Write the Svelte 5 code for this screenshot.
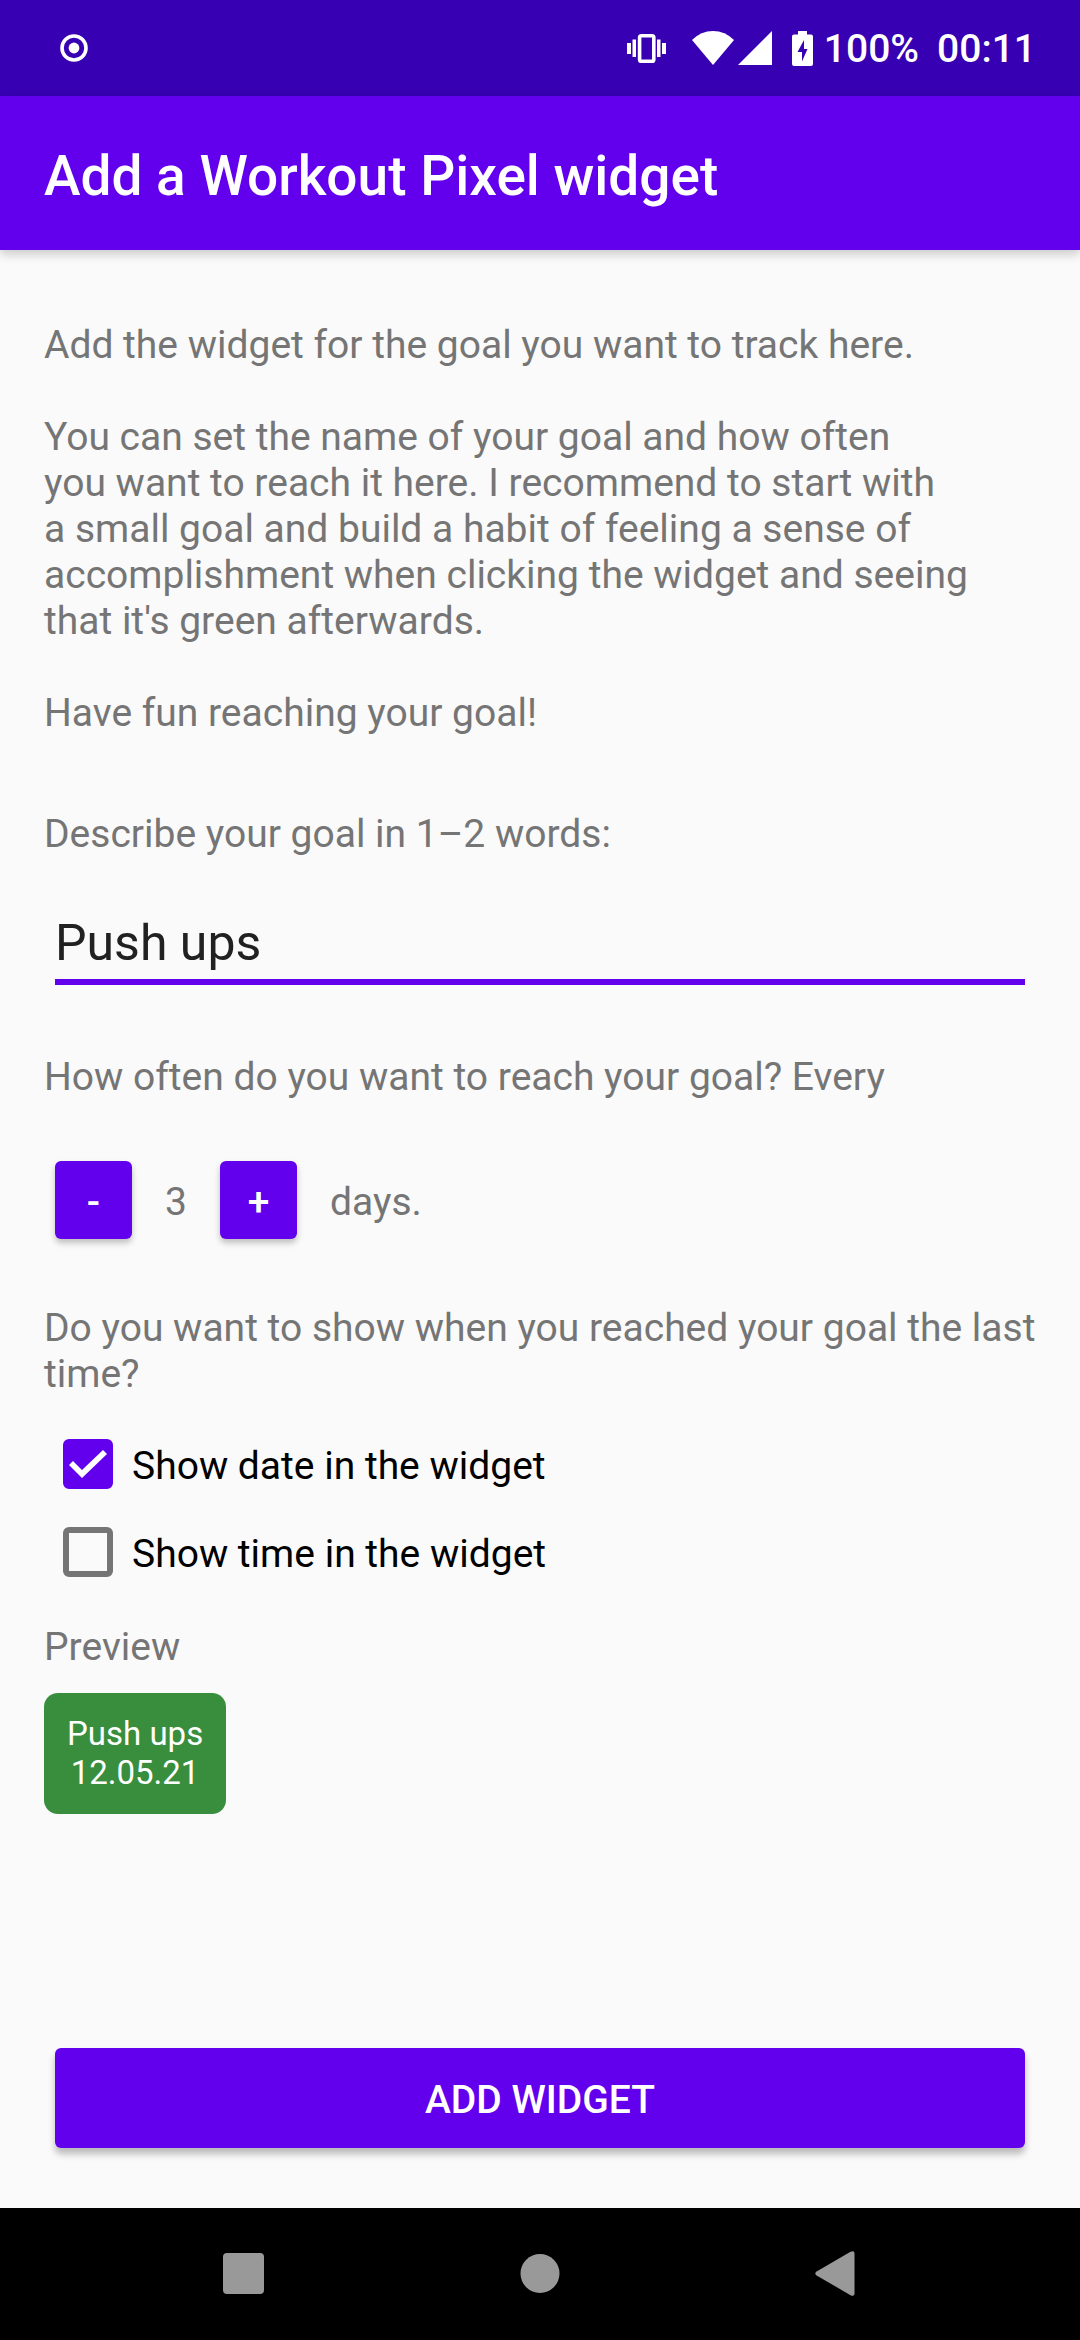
<script>
  let goal = $state('Push ups');
  let days = $state(3);
  let showDate = $state(true);
  let showTime = $state(false);
</script>

<div class="screen">
  <div class="status">
    <svg class="record" viewBox="0 0 28 28" width="28" height="28" aria-hidden="true">
      <circle cx="14" cy="14" r="12" fill="none" stroke="#fff" stroke-width="3.6" />
      <circle cx="14" cy="14" r="5.4" fill="#fff" />
    </svg>
    <div class="indicators">
      <svg class="vibrate" viewBox="0 0 39 29" width="39" height="29" aria-hidden="true">
        <rect x="12.6" y="1.8" width="14.2" height="25.4" rx="1.8" fill="none" stroke="#fff" stroke-width="3.6" />
        <path d="M0 9h4v11H0zM5.5 5.500h3.500v17.500H5.500zM30 5.500h3.500v17.500H30zM35 9h4v11h-4z" fill="#fff" />
      </svg>
      <svg class="wifi" viewBox="0 0 42 34" width="42" height="34" aria-hidden="true">
        <path d="M21 34 0 9Q9 0 21 0T42 9Z" fill="#fff" />
      </svg>
      <svg class="signal" viewBox="0 0 34 34" width="34" height="34" aria-hidden="true">
        <path d="M34 0V34H0Z" fill="#fff" />
      </svg>
      <svg class="battery" viewBox="0 0 21 35" width="21" height="35" aria-hidden="true">
        <path fill-rule="evenodd" fill="#fff" d="M6 0h9v3.500h4a2 2 0 0 1 2 2V33a2 2 0 0 1-2 2H2a2 2 0 0 1-2-2V5.500a2 2 0 0 1 2-2h4ZM12 9 5.500 21H10v9.500L15.500 18H12Z" />
      </svg>
      <span class="percent">100%</span>
      <span class="clock">00:11</span>
    </div>
  </div>

  <header class="appbar"><h1>Add a Workout Pixel widget</h1></header>

  <main>
    <div class="intro">
      <p>Add the widget for the goal you want to track here.</p>
      <p>
        You can set the name of your goal and how often<br />
        you want to reach it here. I recommend to start with<br />
        a small goal and build a habit of feeling a sense of<br />
        accomplishment when clicking the widget and seeing<br />
        that it's green afterwards.
      </p>
      <p>Have fun reaching your goal!</p>
    </div>

    <label class="goal-label" for="goal">Describe your goal in 1–2 words:</label>
    <input id="goal" class="goal" type="text" bind:value={goal} />

    <p class="often">How often do you want to reach your goal? Every</p>
    <div class="stepper">
      <button type="button" aria-label="Fewer days" onclick={() => (days = Math.max(1, days - 1))}>-</button>
      <output>{days}</output>
      <button type="button" aria-label="More days" onclick={() => (days += 1)}>+</button>
      <span class="unit">days.</span>
    </div>

    <p class="question">Do you want to show when you reached your goal the last time?</p>
    <label class="check"><input type="checkbox" bind:checked={showDate} /><span>Show date in the widget</span></label>
    <label class="check"><input type="checkbox" bind:checked={showTime} /><span>Show time in the widget</span></label>

    <p class="preview-title">Preview</p>
    <div class="preview">
      <span>{goal}</span>
      {#if showDate}<span>12.05.21</span>{/if}
      {#if showTime}<span>00:11</span>{/if}
    </div>

    <button type="button" class="add">ADD WIDGET</button>
  </main>

  <nav aria-label="System navigation">
    <button type="button" aria-label="Recent apps">
      <svg viewBox="0 0 46 46" width="46" height="46"><rect x="2" y="2" width="41" height="41" rx="4" fill="#999" /></svg>
    </button>
    <button type="button" aria-label="Home">
      <svg viewBox="0 0 46 46" width="46" height="46"><circle cx="23" cy="22.500" r="19.500" fill="#999" /></svg>
    </button>
    <button type="button" aria-label="Back">
      <svg viewBox="0 0 46 46" width="46" height="46"><path d="M3.600 20.600 37.500.8Q41.500-1 41.500 2.500V42.500Q41.500 46 37.500 44.200L3.600 24.400Q1 22.500 3.600 20.600Z" fill="#999" /></svg>
    </button>
  </nav>
</div>

<style>
  :global(body) {
    margin: 0;
    background: #fafafa;
  }
  .screen {
    display: flex;
    flex-direction: column;
    min-height: 100vh;
    background: #fafafa;
    color: #757575;
    font-family: Roboto, sans-serif;
    font-size: 39px;
    line-height: 46px;
  }
  .screen * {
    box-sizing: border-box;
  }
  h1,
  p {
    margin: 0;
  }
  button {
    border: 0;
    padding: 0;
    font: inherit;
    font-weight: 500;
    color: #fff;
    cursor: pointer;
  }
  svg {
    display: block;
    flex: none;
  }
  .status {
    display: flex;
    align-items: center;
    justify-content: space-between;
    height: 96px;
    padding: 0 44px 0 60px;
    background: #3700b3;
    color: #fff;
    font-weight: 500;
  }
  .indicators {
    display: flex;
    align-items: center;
  }
  .wifi {
    margin-left: 26px;
  }
  .signal {
    margin-left: 4px;
  }
  .battery {
    margin-left: 20px;
  }
  .percent {
    margin: 0 18px 0 11px;
  }
  .percent,
  .clock {
    padding-top: 2px;
  }
  .appbar {
    display: flex;
    align-items: center;
    height: 154px;
    padding: 6px 44px 0;
    background: #6200ee;
    color: #fff;
    box-shadow: 0 4px 10px rgba(0, 0, 0, 0.2);
  }
  h1 {
    font-size: 55px;
    line-height: 64px;
    font-weight: 500;
  }
  main {
    flex: 1;
    display: flex;
    flex-direction: column;
    padding: 72px 44px 60px;
  }
  .intro {
    display: flex;
    flex-direction: column;
    gap: 46px;
  }
  .goal-label {
    margin-top: 75px;
  }
  .goal {
    margin: 56px 11px 0;
    height: 72px;
    padding: 0 0 7px;
    border: 0;
    border-bottom: 6px solid #6200ee;
    border-radius: 0;
    outline: 0;
    background: none;
    color: #212121;
    font: inherit;
    font-size: 50px;
    line-height: 59px;
  }
  .often {
    margin-top: 69px;
  }
  .stepper {
    display: flex;
    align-items: center;
    margin: 61px 11px 0;
  }
  .stepper button {
    width: 77px;
    height: 78px;
  }
  .stepper output {
    width: 88px;
    text-align: center;
  }
  .unit {
    margin-left: 33px;
  }
  .stepper > *,
  .check span,
  .add {
    padding-top: 3px;
  }
  .stepper button,
  .add {
    border-radius: 6px;
    background: #6200ee;
    box-shadow: 0 4px 6px rgba(0, 0, 0, 0.24);
  }
  .question {
    margin: 66px 0 23px;
  }
  .check {
    display: flex;
    align-items: center;
    gap: 19px;
    height: 88px;
    padding-left: 19px;
    color: #000;
  }
  .check input {
    appearance: none;
    display: grid;
    place-items: center;
    flex: none;
    width: 50px;
    height: 50px;
    margin: 0;
    border: 6px solid #757575;
    border-radius: 6px;
  }
  .check input:checked {
    border-color: #6200ee;
    background: #6200ee;
  }
  .check input:checked::before {
    content: '';
    width: 38px;
    height: 28px;
    background: #fff;
    clip-path: polygon(0 15px, 4px 11px, 13px 20px, 34px 0, 38px 4px, 13px 28px);
  }
  .preview-title {
    margin-top: 28px;
  }
  .preview {
    display: flex;
    flex-direction: column;
    align-self: flex-start;
    align-items: center;
    margin: 23px 0 60px;
    padding: 21px 23px 22px;
    border-radius: 14px;
    background: #388e3c;
    color: #fff;
    font-size: 33px;
    line-height: 39px;
  }
  .add {
    height: 100px;
    margin: auto 11px 0;
    box-shadow: 0 6px 7px rgba(0, 0, 0, 0.26);
  }
  nav {
    display: flex;
    justify-content: center;
    align-items: center;
    gap: 250px;
    height: 132px;
    background: #000;
  }
  nav button {
    background: none;
  }
</style>
